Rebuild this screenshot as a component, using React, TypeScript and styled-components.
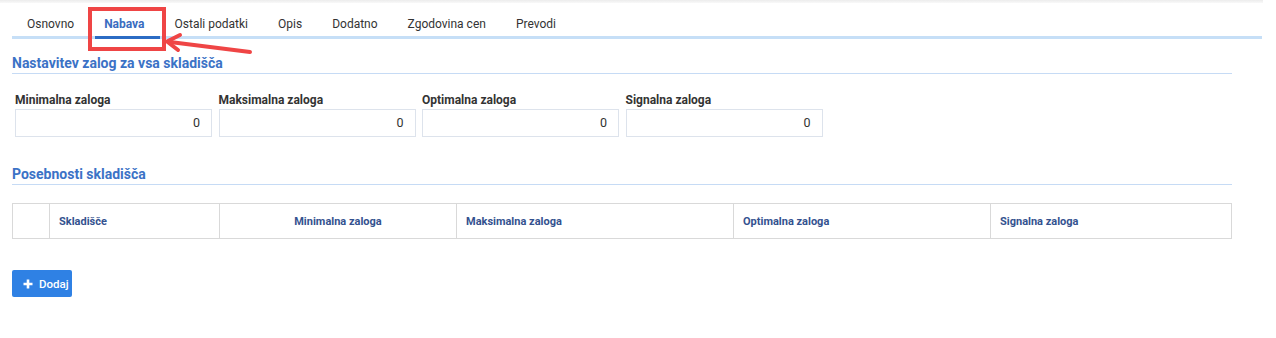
import React from "react";
import styled, { createGlobalStyle } from "styled-components";

const GlobalStyle = createGlobalStyle`
  html, body {
    margin: 0;
    padding: 0;
    background: #ffffff;
    font-family: Roboto, "Liberation Sans", Arial, sans-serif;
    color: #333333;
  }
`;

const tabs = ["Osnovno", "Nabava", "Ostali podatki", "Opis", "Dodatno", "Zgodovina cen", "Prevodi"];
const fields = ["Minimalna zaloga", "Maksimalna zaloga", "Optimalna zaloga", "Signalna zaloga"];

const columns = [
  { label: "", width: 37, align: "left" },
  { label: "Skladišče", width: 170, align: "left" },
  { label: "Minimalna zaloga", width: 237, align: "center" },
  { label: "Maksimalna zaloga", width: 277, align: "left" },
  { label: "Optimalna zaloga", width: 257, align: "left" },
  { label: "Signalna zaloga", width: 241, align: "left" },
];

export default function App() {
  return (
    <>
      <GlobalStyle />
      <TopShadow />
      <Page>
        <TabBar>
          {tabs.map((t) => (
            <Tab key={t} $active={t === "Nabava"}>
              {t}
            </Tab>
          ))}
          <Highlight />
          <Arrow width="90" height="24" viewBox="0 0 90 24">
            <line x1="6" y1="10" x2="86" y2="20" stroke="#ef4545" strokeWidth="4" strokeLinecap="round" />
            <polyline
              points="16,3 3,9.5 14,18"
              fill="none"
              stroke="#ef4545"
              strokeWidth="4"
              strokeLinecap="round"
              strokeLinejoin="round"
            />
          </Arrow>
        </TabBar>

        <Content>
          <SectionTitle>Nastavitev zalog za vsa skladišča</SectionTitle>
          <Fields>
            {fields.map((f) => (
              <Field key={f}>
                <Label>{f}</Label>
                <NumberBox>0</NumberBox>
              </Field>
            ))}
          </Fields>

          <SectionTitle $top={27}>Posebnosti skladišča</SectionTitle>
          <Table>
            <thead>
              <tr>
                {columns.map((c, i) => (
                  <Th key={i} $align={c.align} style={{ width: c.width }}>
                    {c.label}
                  </Th>
                ))}
              </tr>
            </thead>
          </Table>

          <AddButton>
            <svg width="10" height="10" viewBox="0 0 10 10">
              <path d="M5 0.5v9M0.5 5h9" stroke="#fff" strokeWidth="2.6" />
            </svg>
            Dodaj
          </AddButton>
        </Content>
      </Page>
    </>
  );
}

const TopShadow = styled.div`
  width: 1263px;
  height: 3px;
  background: linear-gradient(#ececec, #f9f9f9);
`;

const Page = styled.div`
  padding: 9px 14px 0 12px;
`;

const TabBar = styled.div`
  position: relative;
  display: flex;
  border-bottom: 3px solid #c6dff7;
`;

const Tab = styled.div<{ $active?: boolean }>`
  position: relative;
  padding: 0 15px;
  height: 24px;
  line-height: 24px;
  font-size: 12px;
  color: ${(p) => (p.$active ? "#3a6cc0" : "#333333")};
  font-weight: ${(p) => (p.$active ? 700 : 400)};

  &::after {
    content: "";
    display: ${(p) => (p.$active ? "block" : "none")};
    position: absolute;
    left: 6px;
    right: 0;
    bottom: -3px;
    height: 3px;
    background: #2b6cc4;
  }
`;

const Highlight = styled.div`
  position: absolute;
  left: 76px;
  top: -5px;
  width: 70px;
  height: 36px;
  border: 4px solid #ef4545;
`;

const Arrow = styled.svg`
  position: absolute;
  left: 152px;
  top: 20px;
`;

const Content = styled.div`
  width: 1220px;
`;

const SectionTitle = styled.h2<{ $top?: number }>`
  margin: ${(p) => p.$top ?? 14}px 0 0;
  height: 20px;
  line-height: 20px;
  font-size: 14px;
  font-weight: 700;
  color: #3b72c6;
  border-bottom: 1px solid #c6dbf5;
`;

const Fields = styled.div`
  display: grid;
  grid-template-columns: repeat(4, 197px);
  column-gap: 6.5px;
  margin: 18px 0 0 3px;
`;

const Field = styled.div`
  display: flex;
  flex-direction: column;
`;

const Label = styled.div`
  height: 16px;
  line-height: 16px;
  font-size: 12px;
  font-weight: 700;
  color: #333333;
  margin-bottom: 1px;
`;

const NumberBox = styled.div`
  box-sizing: border-box;
  height: 28px;
  line-height: 26px;
  border: 1px solid #dde3ec;
  text-align: right;
  padding-right: 11px;
  font-size: 12.5px;
  color: #333333;
`;

const Table = styled.table`
  margin-top: 18px;
  width: 1219px;
  border-collapse: collapse;
  table-layout: fixed;
`;

const Th = styled.th<{ $align: string }>`
  box-sizing: border-box;
  height: 35px;
  border: 1px solid #d9d9d9;
  padding: 0 9px;
  text-align: ${(p) => p.$align};
  font-size: 11px;
  font-weight: 700;
  color: #34528f;
`;

const AddButton = styled.button`
  margin-top: 31px;
  display: flex;
  align-items: center;
  gap: 6px;
  height: 27px;
  width: 60px;
  padding: 0 0 0 11px;
  border: none;
  border-radius: 2px;
  background: #2f81e4;
  color: #ffffff;
  font-family: Roboto, "Liberation Sans", Arial, sans-serif;
  font-size: 11.5px;
  font-weight: 500;
  cursor: pointer;
`;
